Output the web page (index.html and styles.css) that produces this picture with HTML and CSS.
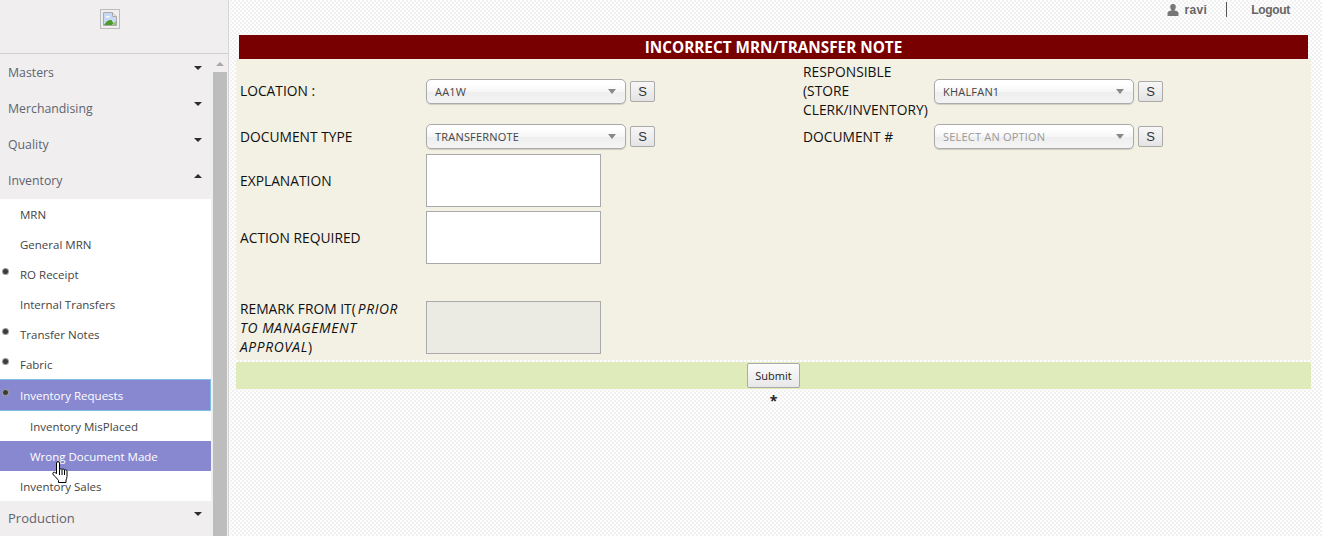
FILE: index.html
```html
<!DOCTYPE html>
<html lang="en">
<head>
<meta charset="utf-8">
<title>Incorrect MRN/Transfer Note</title>
<link rel="stylesheet" href="styles.css">
</head>
<body>
<div class="app">
  <aside class="sidebar">
    <div class="logo">
      <svg class="broken" width="20" height="20" viewBox="0 0 20 20">
        <rect x="0.5" y="0.5" width="19" height="19" fill="#efefef" stroke="#bcbcbc"/>
        <path d="M3.500 3.500h9l4 4v9h-13z" fill="#fff" stroke="#a9a9a9"/>
        <path d="M4 4h8v4h4v5.500L4 16z" fill="#c6daf6"/>
        <path d="M6 7h3.500v1.500H6z" fill="#fff"/>
        <path d="M4 16c2-3.500 5-5.500 7.500-5l2 3.500L12 16z" fill="#4c9a2a"/>
        <path d="M13 14.500l3-2.500v4h-3z" fill="#8cc270"/>
        <path d="M12.500 3.500v4h4" fill="#e6e6e6" stroke="#a9a9a9"/>
      </svg>
    </div>
    <div class="nav-wrap">
      <nav class="nav">
        <div class="group"><span>Masters</span><i class="caret"></i></div>
        <div class="group"><span>Merchandising</span><i class="caret"></i></div>
        <div class="group"><span>Quality</span><i class="caret"></i></div>
        <div class="group"><span>Inventory</span><i class="caret up"></i></div>
        <ul class="sub">
          <li>MRN</li>
          <li>General MRN</li>
          <li class="dot">RO Receipt</li>
          <li>Internal Transfers</li>
          <li class="dot">Transfer Notes</li>
          <li class="dot">Fabric</li>
          <li class="dot open">Inventory Requests</li>
          <li class="deep">Inventory MisPlaced</li>
          <li class="deep hover">Wrong Document Made</li>
          <li>Inventory Sales</li>
        </ul>
        <div class="group group-last"><span>Production</span><i class="caret"></i></div>
      </nav>
      <div class="scrollbar"><i class="sb-up"></i><div class="thumb"></div></div>
    </div>
    <svg class="cursor" width="17" height="23" viewBox="0 0 17 23">
      <path d="M4.500 2c0-1.800 3-1.800 3 0v6.500c.8-.8 2-.8 2.500 0 .7-.6 2-.5 2.500.4.800-.4 2.500-.2 2.500 1.300v5.300c0 1.500-.7 2.500-1 3.500V21.500H6.500v-2C5.500 18 3.800 16.300 1.500 14c-1.200-1.300-.8-2.700.6-2.800.8 0 1.700.7 2.400 1.500z" fill="#fff" stroke="#000" stroke-linejoin="round"/>
      <path d="M7.500 8.500V14M10 8.500V14M12.500 9V14" stroke="#000" fill="none"/>
    </svg>
  </aside>
  <main class="main">
    <header class="topbar">
      <svg class="user-ico" width="12" height="12" viewBox="0 0 12 12"><path d="M6 0a2.800 3 0 0 1 2.800 3c0 1.500-.8 2.800-1.600 3.300 2 .5 4.300 1.200 4.300 3V12H.5V9.300c0-1.800 2.300-2.500 4.300-3C4 5.800 3.200 4.500 3.200 3A2.800 3 0 0 1 6 0z" fill="#777"/></svg>
      <span class="user">ravi</span>
      <span class="sep"></span>
      <span class="logout">Logout</span>
    </header>
    <h1 class="title">INCORRECT MRN/TRANSFER NOTE</h1>
    <form class="form">
      <div class="row row-first">
        <label class="lbl-a">LOCATION :</label>
        <div class="ctl-a"><div class="sel"><span>AA1W</span><i></i></div><button type="button" class="s">S</button></div>
        <label class="lbl-b">RESPONSIBLE (STORE CLERK/INVENTORY)</label>
        <div class="ctl-b"><div class="sel"><span>KHALFAN1</span><i></i></div><button type="button" class="s">S</button></div>
      </div>
      <div class="row row-second">
        <label class="lbl-a">DOCUMENT TYPE</label>
        <div class="ctl-a"><div class="sel"><span>TRANSFERNOTE</span><i></i></div><button type="button" class="s">S</button></div>
        <label class="lbl-b">DOCUMENT #</label>
        <div class="ctl-b"><div class="sel muted"><span>SELECT AN OPTION</span><i></i></div><button type="button" class="s">S</button></div>
      </div>
      <div class="row row-area">
        <label class="lbl-a">EXPLANATION</label>
        <div class="area"></div>
      </div>
      <div class="row row-area">
        <label class="lbl-a">ACTION REQUIRED</label>
        <div class="area"></div>
      </div>
      <div class="row row-area row-remark">
        <label class="lbl-a lbl-wrap">REMARK FROM IT(<em>PRIOR TO MANAGEMENT APPROVAL</em>)</label>
        <div class="area disabled"></div>
      </div>
    </form>
    <div class="actions"><button type="button" class="submit">Submit</button></div>
    <div class="star">*</div>
  </main>
</div>
</body>
</html>
```
FILE: styles.css
```css
* { box-sizing: border-box; }
html, body { margin: 0; height: 100%; overflow: hidden; }
body {
  font-family: "Open Sans", sans-serif;
  background-color: #fff;
  background-image: conic-gradient(#f1f1f1 25%, #fff 0 50%, #f1f1f1 0 75%, #fff 0);
  background-size: 4px 4px;
}
.app { display: flex; height: 536px; }

.sidebar { position: relative; width: 229px; flex: none; background: #f0eeef; border-right: 1px solid #d5d5d5; display: flex; flex-direction: column; overflow: hidden; }
.logo { height: 54px; flex: none; border-bottom: 1px solid #cfcfcf; padding: 9px 0 0 100px; }
.broken { display: block; }
.nav-wrap { display: flex; flex: 1; min-height: 0; }
.nav { width: 211px; flex: none; }
.group { height: 36px; display: flex; align-items: center; justify-content: space-between; padding: 0 9px 0 8px; color: #5f6470; font-size: 12.300px; }
.group-last { height: 34px; font-size: 13px; }
.caret { width: 0; height: 0; border-left: 4px solid transparent; border-right: 4px solid transparent; border-top: 4px solid #2c2c2c; margin-top: -8px; }
.caret.up { border-top: 0; border-bottom: 4px solid #2c2c2c; }
.sub { list-style: none; margin: 1px 0 0; padding: 0; background: #fff; }
.sub li { position: relative; height: 30px; line-height: 31px; padding-left: 20px; font-size: 11.500px; color: #444; }
.sub li.dot::before { content: ""; position: absolute; left: 2px; top: 9px; width: 7px; height: 7px; border-radius: 50%; background: radial-gradient(circle, #3c3c3c 0 2px, #9a9a9a 3px); }
.sub li.open { height: 32px; line-height: 31px; background: #8888d0; color: #fff; border: 1px solid #7fbfe6; border-left: 0; }
.sub li.deep { padding-left: 30px; }
.sub li.hover { background: #8888d0; color: #fff; }

.scrollbar { width: 16px; margin-left: 1px; flex: none; display: flex; flex-direction: column; align-items: center; background: #f0eeef; }
.sb-up { width: 0; height: 0; margin-top: 8px; border-left: 4px solid transparent; border-right: 4px solid transparent; border-bottom: 4px solid #a8a8a8; }
.thumb { width: 14px; flex: 1; margin-top: 6px; background: #bdbdbd; }
.cursor { position: absolute; left: 52px; top: 461px; }

.main { flex: 1; min-width: 0; padding: 0 11px 0 7px; }
.topbar { height: 35px; display: flex; align-items: flex-start; justify-content: flex-end; padding: 3px 21px 0 0; font: 700 12px/14px "Liberation Sans", sans-serif; color: #666; }
.user-ico { margin-top: 1px; margin-right: 6px; }
.user { letter-spacing: .3px; }
.logout { letter-spacing: -.3px; }
.sep { width: 1px; height: 15px; background: #555; margin: -1px 24px 0 19px; }
.title { margin: 0 3px; height: 24px; line-height: 24px; background: #780000; color: #fff; font-size: 15.300px; font-weight: 700; text-align: center; }

.form { background: #f3f0e4; font-size: 13.800px; color: #111; padding-left: 4px; height: 301px; }
.row { display: grid; grid-template-columns: 186px 377px 131px 1fr; align-items: center; line-height: 19px; }
.row-first { height: 63px; padding-top: 2px; }
.row-first .lbl-a, .row-first .lbl-b { margin-top: -2px; }
.row-second { height: 27px; margin-top: 1px; }
.row-area { margin-top: 4px; height: 53px; grid-template-rows: 53px; }
.row-remark { margin-top: 37px; }
.lbl-a, .lbl-b { display: block; }
.lbl-wrap { max-width: 170px; }
.lbl-wrap em { margin-left: 2px; letter-spacing: .6px; }
.ctl-a, .ctl-b { display: flex; align-items: center; gap: 4px; }
.sel { width: 200px; height: 25px; display: flex; align-items: center; justify-content: space-between; padding: 0 9px 0 8px; border: 1px solid #aaa; border-radius: 5px; background: linear-gradient(#fff 20%, #f6f6f6 50%, #eee 52%, #f4f4f4 100%); box-shadow: 0 1px 1px rgba(0,0,0,.15); font-size: 11px; color: #444; letter-spacing: .2px; }
.sel.muted { color: #999; }
.sel i { width: 0; height: 0; border-left: 4px solid transparent; border-right: 4px solid transparent; border-top: 5px solid #888; }
.s { width: 25px; height: 21px; padding: 0; border: 1px solid #aaa; border-radius: 2px; background: linear-gradient(#f7f7f7, #e4e4e4); font: 13px "Liberation Sans", sans-serif; color: #333; }
.area { width: 175px; height: 53px; background: #fff; border: 1px solid #aaa; }
.area.disabled { background: #ebebe4; }

.actions { margin-top: 2px; height: 27px; background: #dfebbb; display: flex; justify-content: center; padding-top: 1px; }
.submit { width: 53px; height: 25px; padding: 0; border: 1px solid #aaa; border-radius: 2px; background: linear-gradient(#fbfbfb, #e8e8e8); font: 11px "Open Sans", sans-serif; color: #222; }
.star { text-align: center; font-size: 14px; font-weight: 700; color: #222; line-height: 20px; margin-top: 2px; }
```
